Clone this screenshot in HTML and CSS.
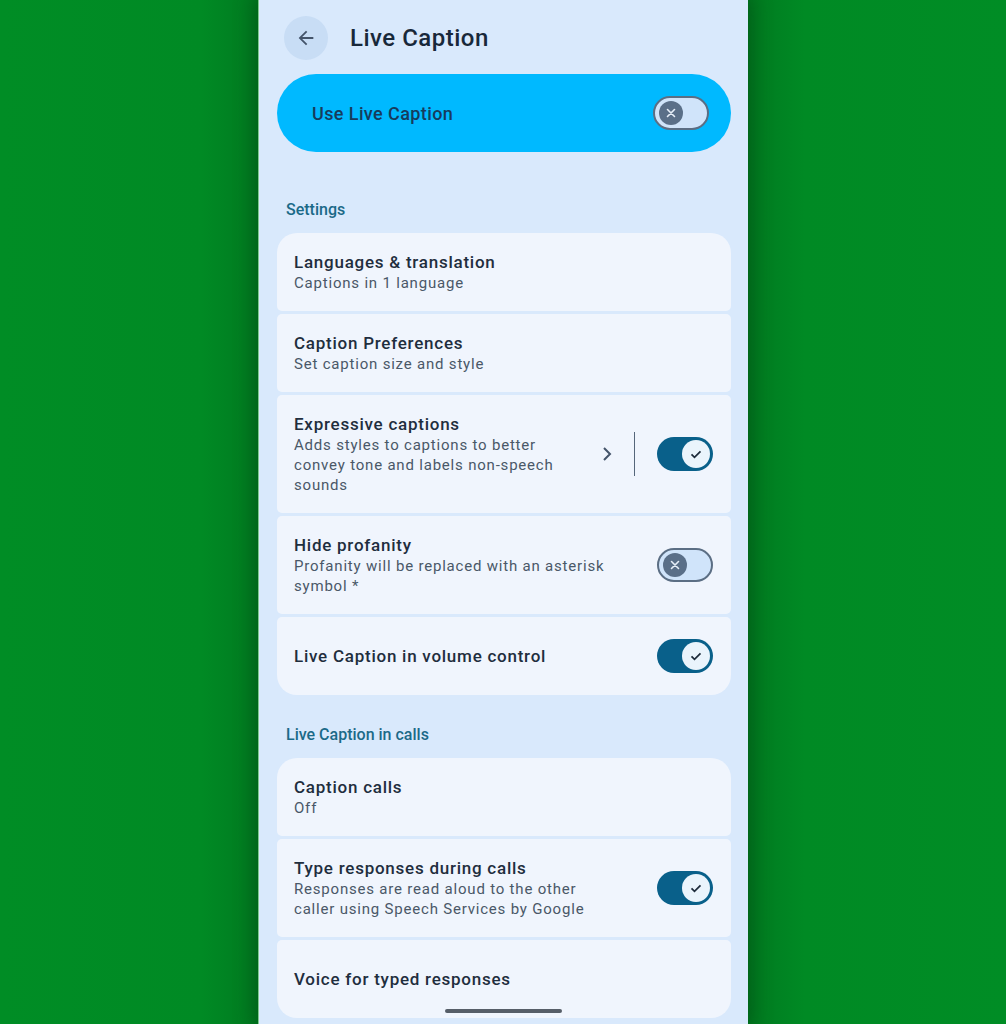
FILE: index.html
```html
<!DOCTYPE html>
<html>
<head>
<meta charset="utf-8">
<link rel="stylesheet" href="styles.css">
</head>
<body>
<div class="phone">
  <header class="topbar">
    <div class="back">
      <svg width="22" height="22" viewBox="0 0 24 24"><path d="M20 11H7.83l5.59-5.59L12 4l-8 8 8 8 1.41-1.41L7.83 13H20v-2z" fill="#44546a"/></svg>
    </div>
    <h1 class="title">Live Caption</h1>
  </header>

  <div class="master">
    <span class="master-label">Use Live Caption</span>
    <span class="switch off"><span class="thumb"><svg width="14" height="14" viewBox="0 0 14 14"><path d="M3.5 3.5l7 7M10.5 3.5l-7 7" stroke="#e6eef8" stroke-width="1.6" stroke-linecap="round"/></svg></span></span>
  </div>

  <div class="section-label first">Settings</div>
  <div class="group">
    <div class="row">
      <div class="text"><div class="t">Languages &amp; translation</div><div class="s">Captions in 1 language</div></div>
    </div>
    <div class="row">
      <div class="text"><div class="t">Caption Preferences</div><div class="s">Set caption size and style</div></div>
    </div>
    <div class="row">
      <div class="text narrow"><div class="t">Expressive captions</div><div class="s">Adds styles to captions to better convey tone and labels non-speech sounds</div></div>
      <div class="chev"><svg width="14" height="20" viewBox="0 0 14 20"><path d="M4 4l6 6-6 6" fill="none" stroke="#44546a" stroke-width="2"/></svg></div>
      <div class="divider"></div>
      <span class="switch on"><span class="thumb"><svg width="14" height="14" viewBox="0 0 14 14"><path d="M2.5 7.3l3 3 6-6" fill="none" stroke="#1d2b3a" stroke-width="1.7"/></svg></span></span>
    </div>
    <div class="row">
      <div class="text"><div class="t">Hide profanity</div><div class="s">Profanity will be replaced with an asterisk symbol *</div></div>
      <span class="switch off"><span class="thumb"><svg width="14" height="14" viewBox="0 0 14 14"><path d="M3.5 3.5l7 7M10.5 3.5l-7 7" stroke="#e6eef8" stroke-width="1.6" stroke-linecap="round"/></svg></span></span>
    </div>
    <div class="row">
      <div class="text"><div class="t">Live Caption in volume control</div></div>
      <span class="switch on"><span class="thumb"><svg width="14" height="14" viewBox="0 0 14 14"><path d="M2.5 7.3l3 3 6-6" fill="none" stroke="#1d2b3a" stroke-width="1.7"/></svg></span></span>
    </div>
  </div>

  <div class="section-label">Live Caption in calls</div>
  <div class="group">
    <div class="row">
      <div class="text"><div class="t">Caption calls</div><div class="s">Off</div></div>
    </div>
    <div class="row">
      <div class="text"><div class="t">Type responses during calls</div><div class="s">Responses are read aloud to the other caller using Speech Services by Google</div></div>
      <span class="switch on"><span class="thumb"><svg width="14" height="14" viewBox="0 0 14 14"><path d="M2.5 7.3l3 3 6-6" fill="none" stroke="#1d2b3a" stroke-width="1.7"/></svg></span></span>
    </div>
    <div class="row">
      <div class="text"><div class="t">Voice for typed responses</div></div>
    </div>
  </div>
  <div class="home-bar"></div>
</div>
</body>
</html>
```

FILE: styles.css
```css
* { box-sizing: border-box; }
html, body { margin: 0; padding: 0; }
body {
  width: 1006px;
  height: 1024px;
  overflow: hidden;
  background: linear-gradient(90deg, #008d25 0%, #008a24 20%, #007a20 25.6%, #007a20 74.5%, #008a24 80%, #008d25 100%);
  display: flex;
  justify-content: center;
  font-family: Roboto, "Noto Sans", sans-serif;
}
.phone {
  width: 490px;
  height: 1024px;
  background: #d9e9fc;
  position: relative;
  padding: 16px 17px 0 18px;
  box-shadow: 0 0 18px 4px rgba(0, 60, 15, 0.45);
  border-left: 1px solid #7fc98f;
}
.topbar {
  display: flex;
  align-items: center;
  height: 44px;
  padding-left: 7px;
}
.back {
  width: 44px;
  height: 44px;
  border-radius: 50%;
  background: #c8ddf5;
  display: flex;
  align-items: center;
  justify-content: center;
}
.title {
  margin: 0 0 0 22px;
  font-size: 24px;
  font-weight: 500;
  color: #18283a;
  letter-spacing: 0.5px;
}
.master {
  margin-top: 14px;
  height: 78px;
  border-radius: 39px;
  background: #00b9ff;
  display: flex;
  align-items: center;
  justify-content: space-between;
  padding: 0 22px 0 35px;
}
.master-label {
  font-size: 18px;
  font-weight: 500;
  color: #173b5c;
  letter-spacing: 0.4px;
}
.switch {
  width: 56px;
  height: 34px;
  border-radius: 17px;
  display: flex;
  align-items: center;
  flex-shrink: 0;
}
.switch.off {
  background: #d0e4fa;
  border: 2px solid #5b6e84;
  padding-left: 4px;
}
.switch.off .thumb {
  width: 24px;
  height: 24px;
  border-radius: 50%;
  background: #5a6f88;
  display: flex;
  align-items: center;
  justify-content: center;
}
.switch.on {
  background: #09608a;
  justify-content: flex-end;
  padding-right: 3px;
}
.switch.on .thumb {
  width: 28px;
  height: 28px;
  border-radius: 50%;
  background: #eaf4fc;
  display: flex;
  align-items: center;
  justify-content: center;
}
.section-label {
  margin: 29px 0 12px 9px;
  font-size: 16px;
  line-height: 22px;
  font-weight: 500;
  color: #1b6a88;
}
.section-label.first { margin-top: 47px; }
.group {
  display: flex;
  flex-direction: column;
  gap: 3px;
}
.row {
  background: #f0f5fd;
  border-radius: 5px;
  padding: 18px 18px 18px 17px;
  display: flex;
  align-items: center;
  min-height: 78px;
}
.group .row:first-child { border-radius: 20px 20px 5px 5px; }
.group .row:last-child { border-radius: 5px 5px 20px 20px; }
.text { flex: 1; min-width: 0; padding-right: 40px; }
.text.narrow { flex: 0 1 285px; padding-right: 0; }
.t {
  font-size: 17px;
  line-height: 22px;
  font-weight: 500;
  color: #1f2e3e;
  letter-spacing: 0.75px;
}
.s {
  font-size: 15px;
  line-height: 20px;
  color: #4a5868;
  letter-spacing: 0.8px;
}
.chev {
  margin-left: auto;
  width: 14px;
  display: flex;
  align-items: center;
}
.divider {
  width: 1px;
  height: 44px;
  background: #55667a;
  margin: 0 22px 0 20px;
}
.home-bar {
  position: absolute;
  left: 186px;
  bottom: 11px;
  width: 117px;
  height: 4px;
  border-radius: 2px;
  background: #565e68;
}
```
